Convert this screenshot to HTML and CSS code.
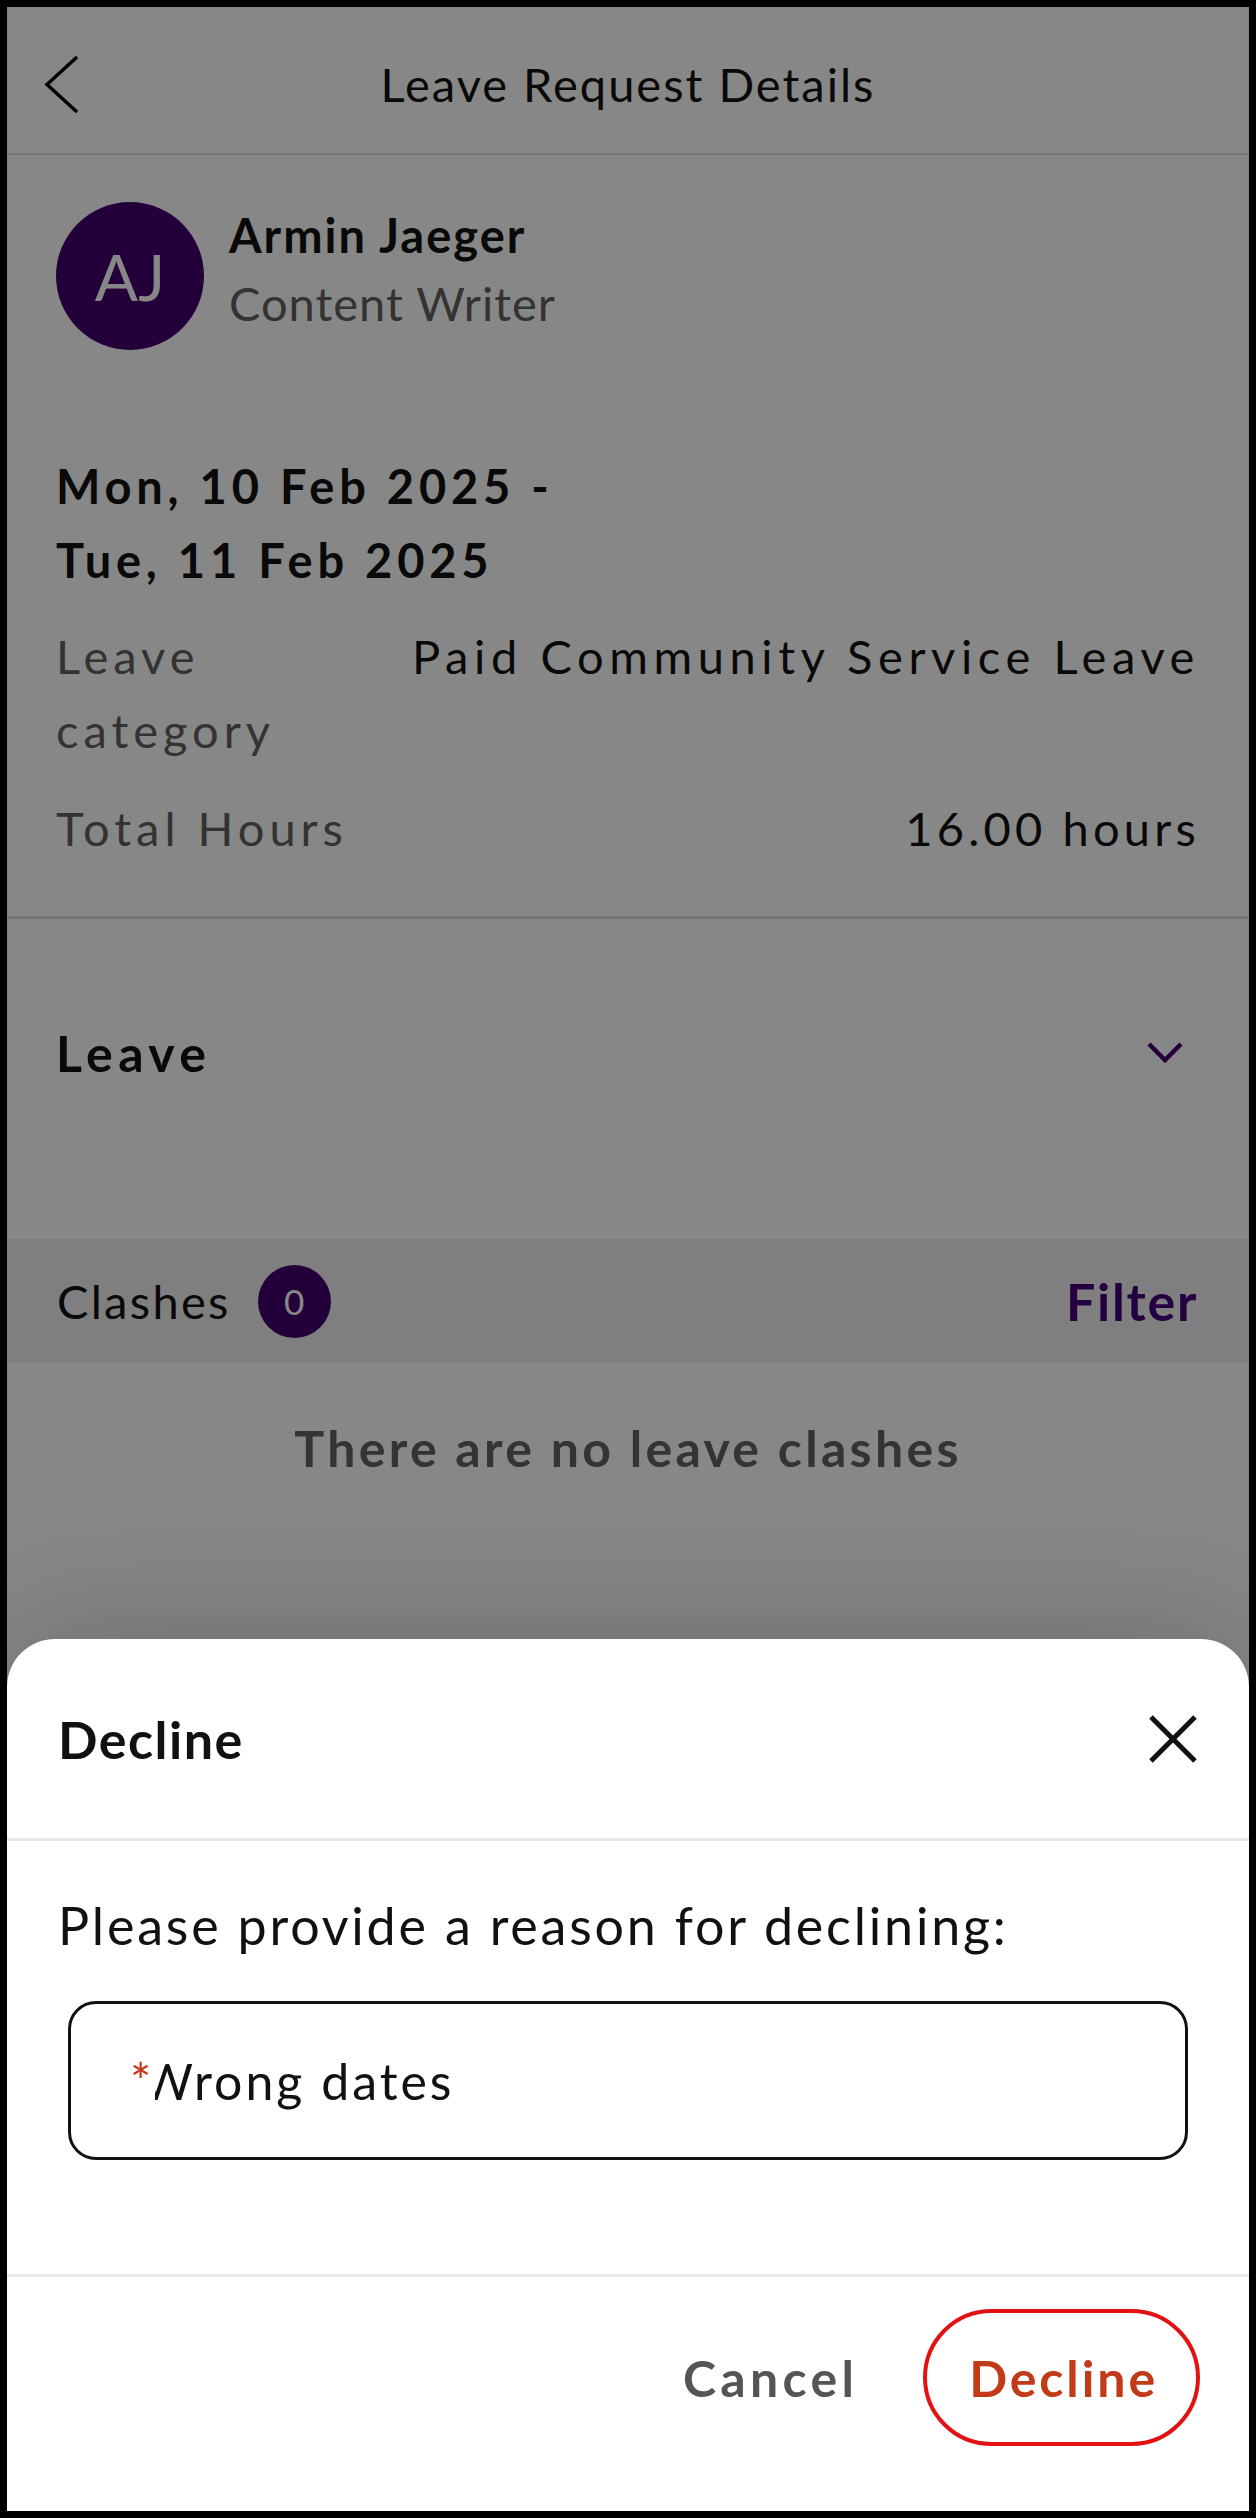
FILE: index.html
```html
<!DOCTYPE html>
<html lang="en">

<head>
    <meta charset="UTF-8">
    <meta name="viewport" content="width=device-width, initial-scale=1.0">
    <title>Leave Request Details</title>
    <link rel="stylesheet" href="styles.css">
</head>

<body>
    <div class="phone">
        <header class="topbar">
            <button class="back" aria-label="Back">
                <svg width="36" height="60" viewBox="0 0 36 60">
                    <polyline points="33,3 3,30.5 33,58" fill="none" stroke="#000" stroke-width="3.5" />
                </svg>
            </button>
            <h1>Leave Request Details</h1>
            <span></span>
        </header>

        <section class="summary">
            <div class="profile">
                <div class="avatar">AJ</div>
                <div class="who">
                    <div class="name">Armin Jaeger</div>
                    <div class="role">Content Writer</div>
                </div>
            </div>
            <div class="dates">Mon, 10 Feb 2025 -<br>Tue, 11 Feb 2025</div>
            <dl class="facts">
                <div class="fact">
                    <dt>Leave category</dt>
                    <dd>Paid Community Service Leave</dd>
                </div>
                <div class="fact">
                    <dt>Total Hours</dt>
                    <dd>16.00 hours</dd>
                </div>
            </dl>
        </section>

        <section class="accordion">
            <span>Leave</span>
            <svg width="38" height="26" viewBox="0 0 38 26">
                <polyline points="3,4 19,20 35,4" fill="none" stroke="#44006f" stroke-width="4.5" />
            </svg>
        </section>

        <div class="clash-bar">
            <span class="clash-label">Clashes</span>
            <span class="count">0</span>
            <a class="filter">Filter</a>
        </div>
        <p class="empty">There are no leave clashes</p>

        <div class="backdrop"></div>

        <div class="sheet">
            <div class="sheet-head">
                <h2>Decline</h2>
                <button class="close" aria-label="Close">
                    <svg width="50" height="50" viewBox="0 0 50 50">
                        <path d="M3 3 L47 47 M47 3 L3 47" stroke="#111" stroke-width="5" />
                    </svg>
                </button>
            </div>
            <div class="sheet-body">
                <p class="prompt">Please provide a reason for declining:</p>
                <div class="reason">
                    <span class="req">*</span>
                    <span class="reason-clip"><span class="reason-text">Wrong dates</span></span>
                </div>
            </div>
            <div class="sheet-foot">
                <button class="btn-cancel">Cancel</button>
                <button class="btn-decline">Decline</button>
            </div>
        </div>
    </div>
</body>

</html>
```

FILE: styles.css
```css
body {
    margin: 0;
    padding: 7px;
    background: #000;
    font-family: Lato, "Open Sans", sans-serif;
    color: #111;
}

.phone {
    position: relative;
    width: 1242px;
    height: 2504px;
    overflow: hidden;
    background: #fff;
}

button {
    font-family: inherit;
    background: none;
    border: 0;
    padding: 0;
    cursor: pointer;
}

.topbar {
    box-sizing: border-box;
    height: 148px;
    padding-top: 8px;
    display: grid;
    grid-template-columns: 120px 1fr 120px;
    align-items: center;
    border-bottom: 2px solid #e0e0e0;
}

.back {
    display: flex;
    margin-left: 37px;
}

.topbar h1 {
    margin: 0;
    text-align: center;
    font-size: 47px;
    font-weight: 400;
    line-height: 60px;
    letter-spacing: 2px;
}

.summary {
    padding: 47px 49px 51px;
    border-bottom: 3px solid #e0e0e0;
}

.profile {
    display: flex;
    align-items: flex-start;
    gap: 25px;
}

.avatar {
    flex: 0 0 148px;
    height: 148px;
    border-radius: 50%;
    background: #44006f;
    color: #fff;
    font-size: 64px;
    display: flex;
    align-items: center;
    justify-content: center;
}

.who {
    margin-top: 3px;
}

.name {
    font-size: 47px;
    font-weight: 700;
    line-height: 60px;
    letter-spacing: 2px;
}

.role {
    font-size: 47px;
    line-height: 76px;
    letter-spacing: 1px;
    color: #606060;
}

.dates {
    margin-top: 99px;
    font-size: 47px;
    font-weight: 700;
    line-height: 74px;
    letter-spacing: 4.8px;
}

.facts {
    margin: 22px 0 0;
    display: flex;
    flex-direction: column;
    gap: 24px;
}

.fact {
    display: flex;
    justify-content: space-between;
    font-size: 47px;
    line-height: 74px;
}

.fact dt {
    flex: 0 0 330px;
    color: #606060;
    letter-spacing: 5px;
}

.fact dd {
    margin: 0;
    text-align: right;
    letter-spacing: 5.6px;
}

.fact + .fact dd {
    letter-spacing: 4.2px;
}

.accordion {
    padding: 97px 65px 149px 49px;
    display: flex;
    align-items: center;
    justify-content: space-between;
    font-size: 50px;
    font-weight: 700;
    line-height: 74px;
    letter-spacing: 5.4px;
}

.clash-bar {
    height: 124px;
    padding: 0 51px 0 50px;
    display: flex;
    align-items: center;
    background: #f0f0f0;
    font-size: 47px;
}

.clash-label {
    letter-spacing: 2.3px;
}

.count {
    margin-left: 27px;
    width: 73px;
    height: 73px;
    border-radius: 50%;
    background: #44006f;
    color: #fff;
    font-size: 35px;
    display: flex;
    align-items: center;
    justify-content: center;
}

.filter {
    margin-left: auto;
    font-size: 52px;
    font-weight: 700;
    letter-spacing: 1.7px;
    color: #46007a;
}

.empty {
    margin: 0;
    padding-top: 48px;
    text-align: center;
    font-size: 50px;
    font-weight: 700;
    line-height: 74px;
    letter-spacing: 3.3px;
    color: #626262;
}

.backdrop {
    position: absolute;
    inset: 0;
    background: rgba(0, 0, 0, 0.47);
}

.sheet {
    position: absolute;
    left: 0;
    right: 0;
    bottom: 0;
    height: 872px;
    background: #fff;
    border-radius: 48px 48px 0 0;
    box-shadow: 0 -10px 120px rgba(0, 0, 0, 0.18);
}

.sheet-head {
    box-sizing: border-box;
    height: 202px;
    padding: 0 51px;
    display: flex;
    align-items: center;
    justify-content: space-between;
    border-bottom: 3px solid #e6e8ea;
}

.sheet-head h2 {
    margin: 0;
    font-size: 52px;
    font-weight: 700;
    letter-spacing: 1.5px;
}

.close {
    display: flex;
}

.sheet-body {
    padding: 53px 51px 114px;
    border-bottom: 3px solid #e6e8ea;
}

.prompt {
    margin: 0;
    font-size: 52px;
    line-height: 62px;
    letter-spacing: 2.8px;
}

.reason {
    box-sizing: border-box;
    height: 159px;
    margin: 45px 10px 0;
    padding: 0 59px;
    display: flex;
    align-items: center;
    border: 3px solid #111;
    border-radius: 28px;
    font-size: 50px;
}

.req {
    color: #c8391a;
}

.reason-clip {
    overflow: hidden;
    margin-left: 4px;
}

.reason-text {
    display: inline-block;
    margin-left: -14px;
    letter-spacing: 3px;
}

.sheet-foot {
    padding: 32px 49px 0;
    display: flex;
    justify-content: flex-end;
    align-items: center;
    gap: 65px;
}

.btn-cancel {
    font-size: 50px;
    font-weight: 700;
    letter-spacing: 4.3px;
    color: #555;
}

.btn-decline {
    box-sizing: border-box;
    height: 137px;
    padding: 0 38px 0 42px;
    border: 4px solid #e31212;
    border-radius: 70px;
    font-size: 50px;
    font-weight: 700;
    letter-spacing: 2.9px;
    color: #c23a18;
}
```
